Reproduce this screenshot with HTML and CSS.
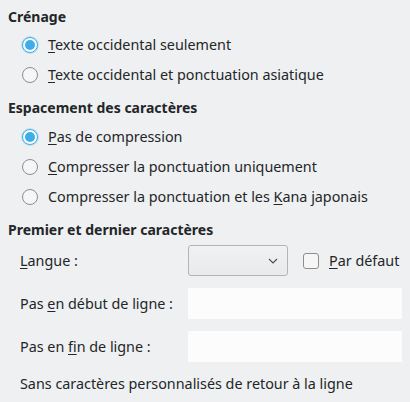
FILE: index.html
```html
<!DOCTYPE html>
<html lang="fr">
<head>
<meta charset="utf-8">
<link rel="stylesheet" href="styles.css">
</head>
<body>
<div class="page">
  <div class="heading">Crénage</div>
  <div class="group g1">
    <div class="radio-row"><span class="radio checked"></span><span class="label"><u>T</u>exte occidental seulement</span></div>
    <div class="radio-row"><span class="radio"></span><span class="label"><u>T</u>exte occidental et ponctuation asiatique</span></div>
  </div>
  <div class="heading">Espacement des caractères</div>
  <div class="group g2">
    <div class="radio-row"><span class="radio checked"></span><span class="label"><u>P</u>as de compression</span></div>
    <div class="radio-row"><span class="radio"></span><span class="label"><u>C</u>ompresser la ponctuation uniquement</span></div>
    <div class="radio-row"><span class="radio"></span><span class="label">Compresser la ponctuation et les <u>K</u>ana japonais</span></div>
  </div>
  <div class="heading">Premier et dernier caractères</div>
  <div class="form">
    <div class="flabel"><u>L</u>angue :</div>
    <div class="langrow">
      <div class="combo">
        <svg class="chev" width="10" height="6" viewBox="0 0 10 6"><path d="M1 1 L5 5 L9 1" fill="none" stroke="#4d4f52" stroke-width="1.1"/></svg>
      </div>
      <span class="check"></span>
      <span class="label"><u>P</u>ar défaut</span>
    </div>
    <div class="flabel">Pas <u>e</u>n début de ligne :</div>
    <div class="input"></div>
    <div class="flabel">Pas en <u>fi</u>n de ligne :</div>
    <div class="input"></div>
    <div class="note">Sans caractères personnalisés de retour à la ligne</div>
  </div>
</div>
</body>
</html>
```

FILE: styles.css
```css
html, body {
  margin: 0;
  padding: 0;
  background: #eff0f1;
}
body {
  font-family: "Noto Sans", "DejaVu Sans", sans-serif;
  font-size: 14.35px;
  color: #232629;
  width: 410px;
  height: 402px;
  overflow: hidden;
}
.page {
  padding: 7px 8px 0 8px;
}
u {
  text-decoration: underline;
  text-underline-offset: 2px;
  text-decoration-thickness: 1px;
}
.heading {
  font-weight: bold;
  font-size: 14px;
  line-height: 20px;
  height: 20px;
}
.group {
  display: flex;
  flex-direction: column;
  padding-left: 14px;
}
.g1 { margin-top: 3px; margin-bottom: 8px; }
.g2 { margin-top: 4px; margin-bottom: 8px; }
.radio-row {
  display: flex;
  align-items: center;
  height: 30px;
  gap: 10px;
}
.radio {
  box-sizing: border-box;
  width: 16px;
  height: 16px;
  border-radius: 50%;
  border: 1px solid #8b8d8f;
  background: #f6f6f7;
  flex: none;
  display: flex;
  align-items: center;
  justify-content: center;
}
.radio.checked {
  border-color: #3daee9;
  background: #fcfcfc;
  box-shadow: 0 0 0 1px rgba(61,174,233,0.25);
}
.radio.checked::after {
  content: "";
  width: 10px;
  height: 10px;
  border-radius: 50%;
  background: #3daee9;
}
.label {
  line-height: 20px;
}
.form {
  display: grid;
  grid-template-columns: 168px 214px;
  padding-left: 12px;
  margin-top: 5px;
  row-gap: 12px;
  align-items: center;
}
.flabel {
  line-height: 20px;
}
.langrow {
  display: flex;
  align-items: center;
  height: 31px;
}
.combo {
  box-sizing: border-box;
  width: 100px;
  height: 31px;
  border: 1px solid #b4b5b7;
  border-radius: 3px;
  background: linear-gradient(#f0f1f2, #e9eaeb);
  display: flex;
  align-items: center;
  justify-content: flex-end;
  padding-right: 9px;
  flex: none;
}
.chev { display: block; }
.check {
  box-sizing: border-box;
  width: 16px;
  height: 16px;
  border: 1px solid #8b8d8f;
  border-radius: 3px;
  background: #f6f6f7;
  margin-left: 15px;
  margin-right: 10px;
  flex: none;
}
.input {
  height: 31px;
  background: #fcfcfc;
}
.note {
  grid-column: 1 / 3;
  line-height: 20px;
  margin-top: 0;
}
```
